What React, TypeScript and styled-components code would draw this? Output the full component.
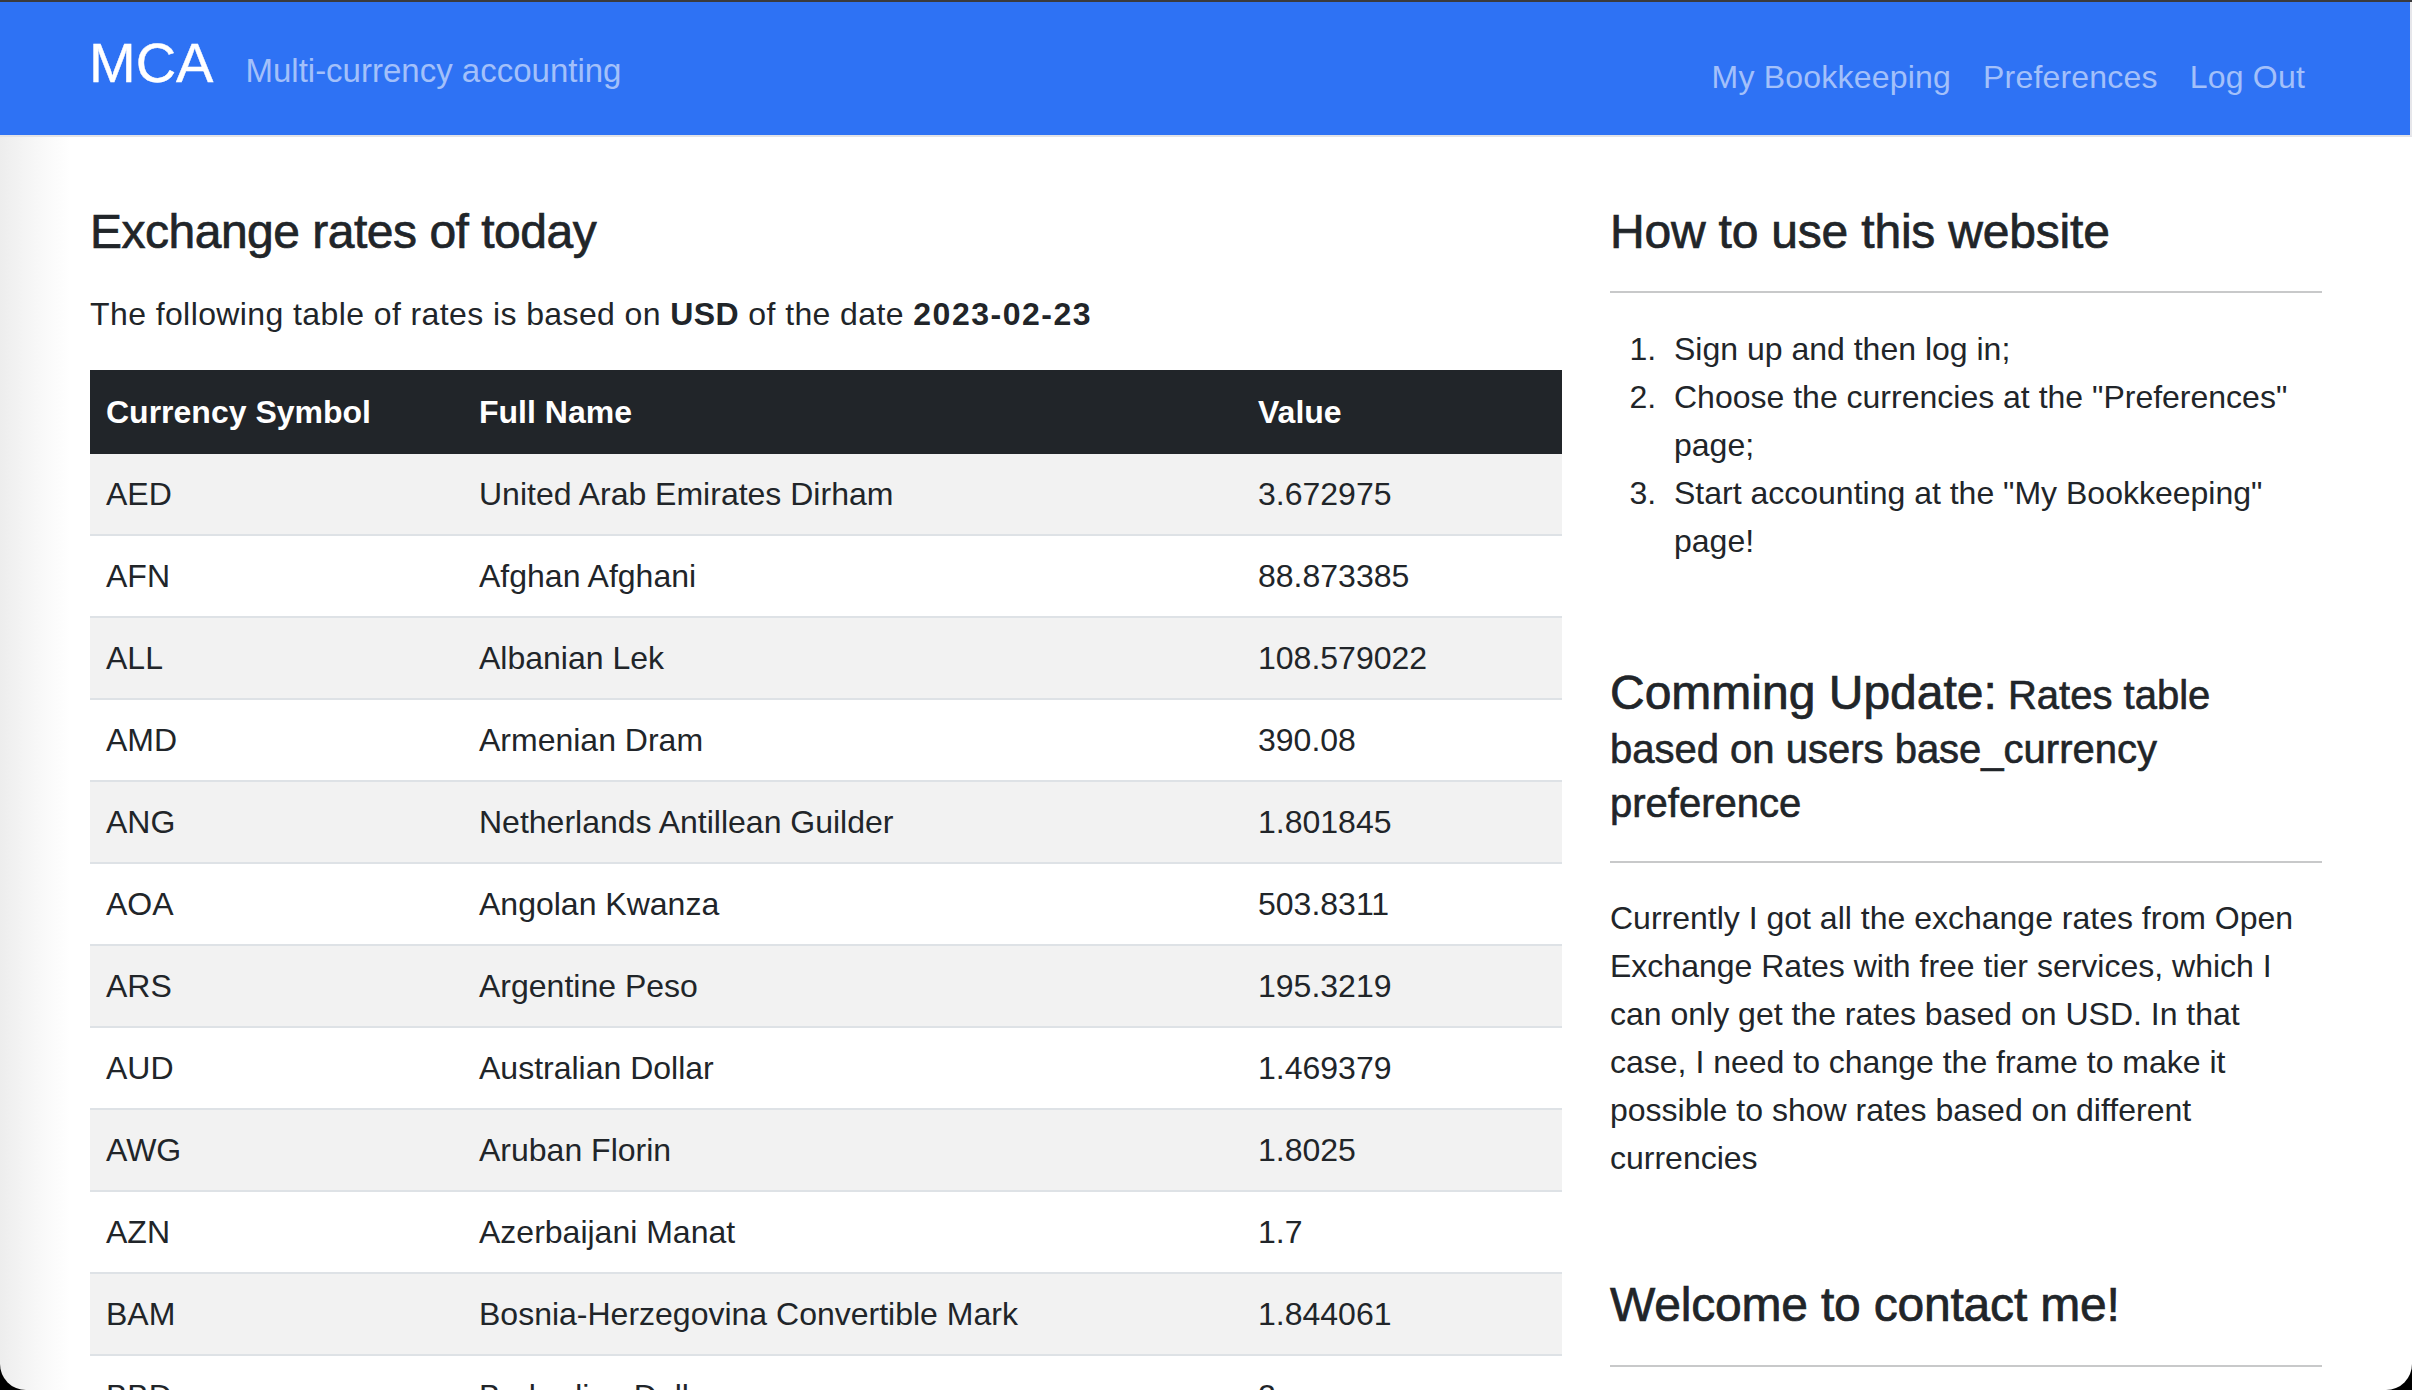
import React from "react";
import styled, { createGlobalStyle } from "styled-components";

const Global = createGlobalStyle`
  html, body { margin: 0; padding: 0; background: #000; overflow: hidden; }
  body { font-family: "Liberation Sans", Arial, Helvetica, sans-serif; color: #212529; }
  * { box-sizing: border-box; }
`;

const Window = styled.div`
  height: 1390px;
  overflow: hidden;
  background: linear-gradient(90deg, #ededed 0, #f7f7f7 35px, #ffffff 70px);
  border-top: 2px solid #3a3a3c;
  border-radius: 0 0 26px 26px;
  font-size: 32px;
  line-height: 48px;
`;

const NavBar = styled.nav`
  background: #2e72f4;
  height: 135px;
  border-bottom: 2px solid #e3e3e6;
  border-right: 2px solid #e6e6ea;
`;

const Container = styled.div`
  width: 2280px;
  margin: 0 auto;
  padding: 0 24px;
`;

const NavInner = styled(Container)`
  display: flex;
  justify-content: space-between;
  align-items: flex-start;
`;

const BrandGroup = styled.div`
  display: flex;
  align-items: baseline;
  margin-top: 27px;
`;

const Brand = styled.a`
  font-size: 56px;
  line-height: 67px;
  color: #ffffff;
  margin-right: 32px;
  text-decoration: none;
  -webkit-text-stroke: 0.4px currentColor;
`;

const Tagline = styled.span`
  font-size: 33px;
  line-height: 48px;
  color: #a3c0fa;
`;

const NavLinks = styled.div`
  display: flex;
  margin-top: 51px;
`;

const NavLink = styled.a`
  padding: 0 16px;
  font-size: 32px;
  line-height: 48px;
  color: #a3c0fa;
  text-decoration: none;
  letter-spacing: 0.2px;
`;

const Main = styled(Container)`
  display: grid;
  grid-template-columns: 1472px 712px;
  column-gap: 48px;
  padding-top: 66px;
`;

const Column = styled.section`
  display: flex;
  flex-direction: column;
  min-width: 0;
`;

const Heading = styled.h4<{ $mt?: number; $ls?: number }>`
  margin: ${(p) => p.$mt ?? 0}px 0 0;
  font-size: 48px;
  line-height: 57.6px;
  font-weight: 400;
  letter-spacing: ${(p) => p.$ls ?? -0.2}px;
  -webkit-text-stroke: 0.7px currentColor;
`;

const UpdateHeading = styled.h5<{ $mt?: number }>`
  margin: ${(p) => p.$mt ?? 0}px 0 0;
  font-size: 40px;
  line-height: 54px;
  font-weight: 400;
  -webkit-text-stroke: 0.6px currentColor;
`;

const UpdateLabel = styled.span`
  font-size: 48px;
  -webkit-text-stroke: 0.7px currentColor;
`;

const Lead = styled.p`
  margin: 29px 0 32px;
  letter-spacing: 0.4px;
`;

const Strong = styled.b<{ $ls?: number }>`
  font-weight: 700;
  letter-spacing: ${(p) => p.$ls ?? 0.4}px;
`;

const Text = styled.p`
  margin: 0;
`;

const Divider = styled.hr<{ $mt: number; $mb: number }>`
  border: 0;
  height: 2px;
  background: #c8c9ca;
  margin: ${(p) => p.$mt}px 0 ${(p) => p.$mb}px;
`;

const Steps = styled.ol`
  margin: 0;
  padding-left: 64px;

  li::marker {
    content: counter(list-item) ".\\00a0\\00a0";
  }
`;

const RatesTable = styled.table`
  width: 100%;
  border-collapse: collapse;
  table-layout: fixed;
`;

const HeadCell = styled.th<{ $w?: number }>`
  ${(p) => (p.$w ? `width: ${p.$w}px;` : "")}
  background: #212529;
  color: #ffffff;
  font-weight: 700;
  text-align: left;
  padding: 18px 16px;
  line-height: 48px;
`;

const Row = styled.tr<{ $striped: boolean }>`
  background: ${(p) => (p.$striped ? "#f2f2f2" : "#ffffff")};
`;

const Cell = styled.td`
  padding: 16px;
  line-height: 48px;
  border-bottom: 2px solid #dee2e6;
  white-space: nowrap;
`;

const rates: [string, string, string][] = [
  ["AED", "United Arab Emirates Dirham", "3.672975"],
  ["AFN", "Afghan Afghani", "88.873385"],
  ["ALL", "Albanian Lek", "108.579022"],
  ["AMD", "Armenian Dram", "390.08"],
  ["ANG", "Netherlands Antillean Guilder", "1.801845"],
  ["AOA", "Angolan Kwanza", "503.8311"],
  ["ARS", "Argentine Peso", "195.3219"],
  ["AUD", "Australian Dollar", "1.469379"],
  ["AWG", "Aruban Florin", "1.8025"],
  ["AZN", "Azerbaijani Manat", "1.7"],
  ["BAM", "Bosnia-Herzegovina Convertible Mark", "1.844061"],
  ["BBD", "Barbadian Dollar", "2"],
  ["BDT", "Bangladeshi Taka", "106.870181"],
  ["BGN", "Bulgarian Lev", "1.8399"],
];

export default function App() {
  return (
    <>
      <Global />
      <Window>
        <NavBar>
          <NavInner>
            <BrandGroup>
              <Brand href="#">MCA</Brand>
              <Tagline>Multi-currency accounting</Tagline>
            </BrandGroup>
            <NavLinks>
              <NavLink href="#">My Bookkeeping</NavLink>
              <NavLink href="#">Preferences</NavLink>
              <NavLink href="#">Log Out</NavLink>
            </NavLinks>
          </NavInner>
        </NavBar>
        <Main>
          <Column>
            <Heading $ls={-0.5}>Exchange rates of today</Heading>
            <Lead>
              The following table of rates is based on <Strong>USD</Strong> of the date{" "}
              <Strong $ls={1.5}>2023-02-23</Strong>
            </Lead>
            <RatesTable>
              <thead>
                <tr>
                  <HeadCell $w={373}>Currency Symbol</HeadCell>
                  <HeadCell $w={779}>Full Name</HeadCell>
                  <HeadCell>Value</HeadCell>
                </tr>
              </thead>
              <tbody>
                {rates.map(([sym, name, val], i) => (
                  <Row key={sym} $striped={i % 2 === 0}>
                    <Cell>{sym}</Cell>
                    <Cell>{name}</Cell>
                    <Cell>{val}</Cell>
                  </Row>
                ))}
              </tbody>
            </RatesTable>
          </Column>
          <Column>
            <Heading>How to use this website</Heading>
            <Divider $mt={30} $mb={32} />
            <Steps>
              <li>Sign up and then log in;</li>
              <li>Choose the currencies at the "Preferences" page;</li>
              <li>Start accounting at the "My Bookkeeping" page!</li>
            </Steps>
            <UpdateHeading $mt={101}>
              <UpdateLabel>Comming Update:</UpdateLabel> Rates table based on users base_currency preference
            </UpdateHeading>
            <Divider $mt={31} $mb={31} />
            <Text>
              Currently I got all the exchange rates from Open Exchange Rates with free tier services, which I can
              only get the rates based on USD. In that case, I need to change the frame to make it possible to show
              rates based on different currencies
            </Text>
            <Heading $mt={94}>Welcome to contact me!</Heading>
            <Divider $mt={32} $mb={32} />
          </Column>
        </Main>
      </Window>
    </>
  );
}
